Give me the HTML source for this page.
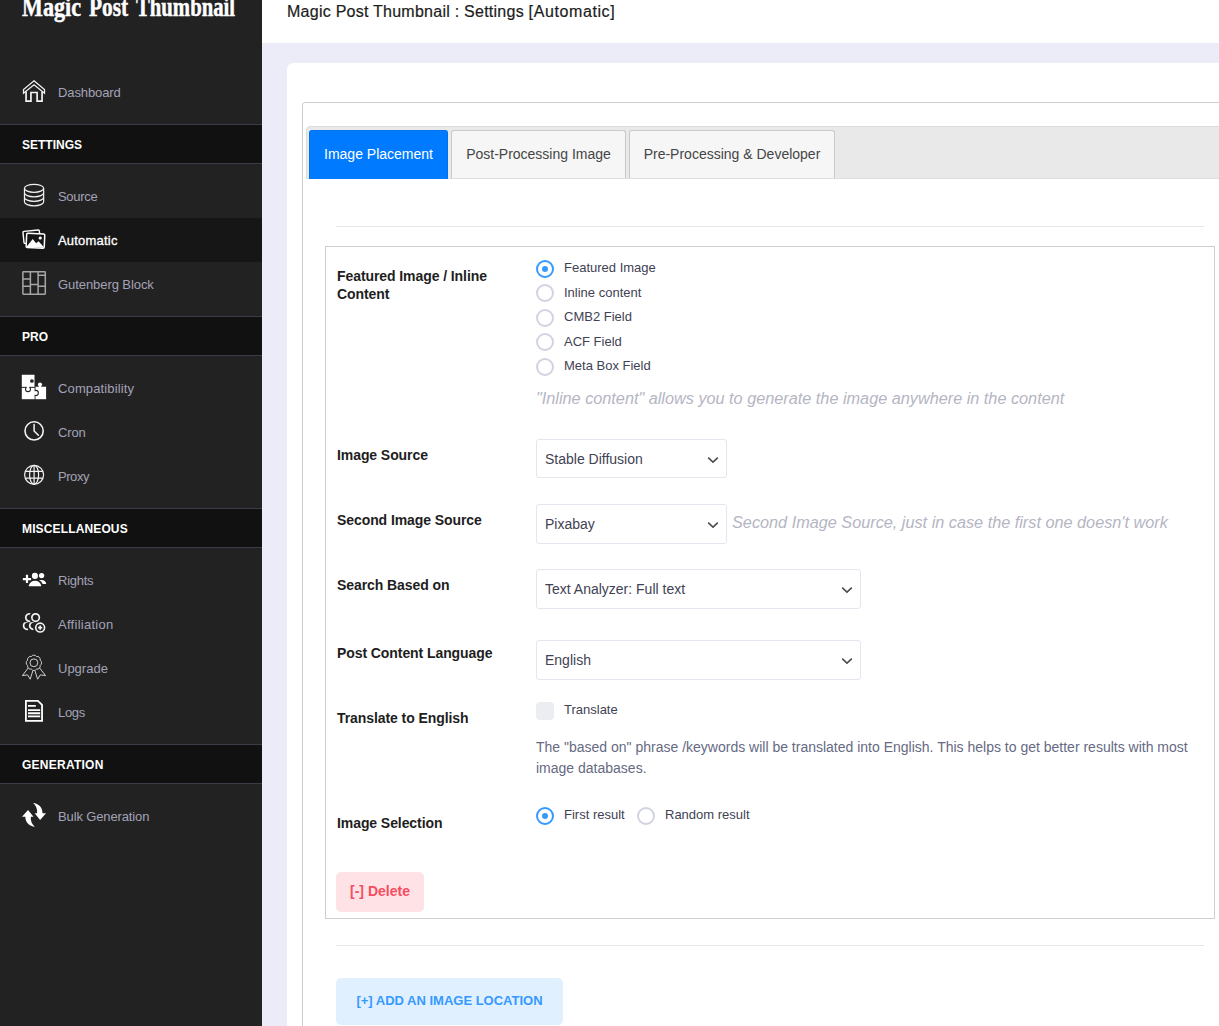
<!DOCTYPE html>
<html lang="en">
<head>
<meta charset="utf-8">
<title>Magic Post Thumbnail : Settings [Automatic]</title>
<style>
*{box-sizing:border-box;margin:0;padding:0}
html,body{width:1219px;height:1026px;overflow:hidden;background:#ebecf7;font-family:"Liberation Sans",sans-serif;}
body{position:relative}
.abs{position:absolute}
/* ---------- sidebar ---------- */
#side{position:absolute;left:0;top:0;width:262px;height:1026px;background:#222222;overflow:hidden}
#logo span{position:absolute;top:-9px;white-space:nowrap;color:#fff;font-family:"Liberation Serif",serif;font-weight:bold;font-size:28px;line-height:32px;transform-origin:0 0;-webkit-text-stroke:.5px #fff}
.sec{position:absolute;left:0;width:262px;height:40px;background:#111111;border-top:1px solid #3b3b4a;border-bottom:1px solid #3b3b4a;color:#fff;font-weight:bold;font-size:12px;line-height:40px;padding-left:22px;letter-spacing:0}
.mi{position:absolute;left:0;width:262px;height:44px;color:#a2a3b7;font-size:13px;line-height:45px;padding-left:58px;white-space:nowrap}
.mi.t10 svg{top:10px}
.mi.act{background:#161616;color:#fff;letter-spacing:.2px;-webkit-text-stroke:.3px #fff}
.mi svg{position:absolute;left:22px;top:8px;width:24px;height:24px;overflow:visible}
/* ---------- main ---------- */
#hdr{position:absolute;left:262px;top:0;width:957px;height:43px;background:#fff}
#hdr span{position:absolute;left:25px;top:0;line-height:23px;font-size:16px;letter-spacing:.33px;color:#1c1c1c;white-space:nowrap;-webkit-text-stroke:.2px #1c1c1c}
#card{position:absolute;left:287px;top:63px;width:940px;height:970px;background:#fff;border-radius:6px 0 0 0}
#inner{position:absolute;left:302px;top:102px;width:930px;height:930px;border:1px solid #ccc;border-radius:3px 0 0 0}
#tabbar{position:absolute;left:306px;top:126px;width:920px;height:53px;background:#e9e9e9;border:1px solid #dddddd;border-radius:4px 0 0 0}
.tab{position:absolute;top:130px;height:48px;border:1px solid #c9c9c9;border-bottom:none;border-radius:3px 3px 0 0;background:#f6f6f6;color:#454545;font-size:14px;line-height:47px;text-align:center;white-space:nowrap}
.tab.on{background:#007bff;border-color:#0072ec;color:#fff;height:49px}
.hr{position:absolute;left:336px;width:868px;height:1px;background:#e6e6e6}
#box{position:absolute;left:325px;top:246px;width:890px;height:673px;border:1px solid #cfcfcf}
.lbl{position:absolute;left:337px;font-weight:bold;font-size:14px;line-height:18px;color:#1e1e1e;letter-spacing:-.08px}
.rad{position:absolute;width:18px;height:18px;border-radius:50%;border:2px solid #d1d3e0;background:#fff}
.rad.on{border:2px solid #3699ff}
.rad.on:after{content:"";position:absolute;left:4px;top:4px;width:6px;height:6px;border-radius:50%;background:#3699ff}
.rl{position:absolute;font-size:13px;line-height:16px;color:#3f4254;white-space:nowrap}
.hint{position:absolute;font-style:italic;font-size:16.25px;line-height:20px;color:#b5b5c3;white-space:nowrap}
.sel{position:absolute;left:536px;height:39px;border:1px solid #e4e6ef;border-radius:3px;background:#fff;font-size:14px;line-height:38px;padding-left:8px;color:#3f4254;white-space:nowrap}
.sel svg{position:absolute;right:7px;top:17px;width:12px;height:8px;overflow:visible}
.chk{position:absolute;left:536px;top:702px;width:18px;height:18px;border-radius:4px;background:#ebedf3}
.desc{position:absolute;left:536px;top:737px;width:670px;font-size:14px;line-height:21px;color:#666a82}
.btn{position:absolute;border-radius:5px;font-weight:bold;font-size:14px;text-align:center;white-space:nowrap}
</style>
</head>
<body>
<!-- SIDEBAR -->
<div id="side">
  <div id="logo"><span style="left:22.4px;transform:scaleX(.79)">Magic</span><span style="left:89.3px;transform:scaleX(.763)">Post</span><span style="left:135.6px;transform:scaleX(.74)">Thumbnail</span></div>
  <div class="mi t10" style="top:70px;letter-spacing:-0.1px"><svg viewBox="0 0 24 24"><path d="M12 0.8 L22.5 9.6 V13.2 L12 4.7 L1.5 13.2 V9.6 Z" fill="none" stroke="#f2f2f2" stroke-width="1.25" stroke-linejoin="miter"/><path d="M4.05 11.6 V21.05 H8.95 V12.5 H15.1 V21.05 H20.05 V11.6" fill="none" stroke="#f2f2f2" stroke-width="1.7"/></svg>Dashboard</div>
  <div class="sec" style="top:124px">SETTINGS</div>
  <div class="mi t10" style="top:174px;letter-spacing:-0.3px"><svg viewBox="0 0 24 24"><g fill="none" stroke="#f2f2f2" stroke-width="1.2"><ellipse cx="12.05" cy="4.3" rx="9.6" ry="4"/><path d="M2.45 4.3 V17.8 A9.6 4 0 0 0 21.65 17.8 V4.3"/><path d="M2.45 8.8 A9.6 4 0 0 0 21.65 8.8"/><path d="M2.45 13.3 A9.6 4 0 0 0 21.65 13.3"/></g></svg>Source</div>
  <div class="mi act t10" style="top:218px"><svg viewBox="0 0 24 24"><g transform="rotate(-5.7 0.9 3.5)"><rect x="0.9" y="3.5" width="16.4" height="12" rx="1" fill="none" stroke="#fff" stroke-width="1.4"/></g><g transform="rotate(2.5 13.5 12.7)"><rect x="4.4" y="5.6" width="18.1" height="14.2" rx="1.2" fill="#161616" stroke="#fff" stroke-width="1.5"/><path d="M5 19 L10.7 11 L14.2 15.3 L16.6 13.2 L22 18.6 V19.4 H5Z" fill="#fff"/><circle cx="18.1" cy="9.8" r="1.6" fill="#fff"/></g></svg>Automatic</div>
  <div class="mi" style="top:262px;letter-spacing:-0.07px"><svg viewBox="0 0 24 24"><g fill="none" stroke="#a6a6a6" stroke-width="1.5"><rect x="0.9" y="1.7" width="22.4" height="22.5" rx="0.6"/><path d="M8.4 1.6 V24.3 M16.1 1.6 V24.3 M0.8 8.9 H8.4 M0.8 16.3 H8.4 M8.4 14.6 H16.1 M16.1 5.2 H23.4 M16.1 16.3 H23.4"/></g></svg>Gutenberg Block</div>
  <div class="sec" style="top:316px">PRO</div>
  <div class="mi" style="top:366px;letter-spacing:0.13px"><svg viewBox="0 0 24 24"><rect x="13.3" y="12.7" width="10.8" height="12.5" fill="#fff"/><circle cx="18" cy="10.6" r="2.1" fill="#fff"/><rect x="16.9" y="10.6" width="2.2" height="3" fill="#fff"/><circle cx="13.8" cy="18.9" r="3.1" fill="#222222"/><rect x="12.5" y="12.5" width="0.8" height="12.8" fill="#222222"/><rect x="-0.2" y="13.6" width="12.8" height="11.6" fill="#fff"/><circle cx="13.8" cy="18.9" r="2" fill="#fff"/><rect x="11.5" y="17.8" width="2" height="2.2" fill="#fff"/><circle cx="6" cy="15.2" r="3" fill="#222222"/><rect x="-0.2" y="12.8" width="12.9" height="0.8" fill="#222222"/><rect x="-0.2" y="0.75" width="12.7" height="12.1" fill="#fff"/><circle cx="6" cy="15.2" r="1.9" fill="#fff"/><rect x="4.9" y="12" width="2.2" height="2.5" fill="#fff"/><circle cx="9.9" cy="7" r="1.85" fill="#222222"/></svg>Compatibility</div>
  <div class="mi" style="top:410px;letter-spacing:-0.15px"><svg viewBox="0 0 24 24"><circle cx="12.1" cy="12.9" r="9.1" fill="none" stroke="#f2f2f2" stroke-width="1.6"/><path d="M12.1 6.6 V12.9 L16.4 17.3" fill="none" stroke="#f2f2f2" stroke-width="1.5" stroke-linecap="round" stroke-linejoin="round"/></svg>Cron</div>
  <div class="mi" style="top:454px;letter-spacing:-0.45px"><svg viewBox="0 0 24 24"><g fill="none" stroke="#f2f2f2" stroke-width="1.2"><circle cx="12.1" cy="12.8" r="9.5"/><ellipse cx="12.1" cy="12.8" rx="4.5" ry="9.5"/><path d="M12.1 3.3 V22.3 M3.3 9.4 H20.9 M3.3 16.2 H20.9"/></g></svg>Proxy</div>
  <div class="sec" style="top:508px;letter-spacing:.14px">MISCELLANEOUS</div>
  <div class="mi" style="top:558px;letter-spacing:-0.25px"><svg viewBox="0 0 24 24"><path d="M4.97 8.85 V17.1 M0.83 13.1 H9.1" stroke="#fff" stroke-width="2.2" fill="none"/><circle cx="12.92" cy="9.9" r="3.05" fill="#fff"/><path d="M6.8 20.2 V19.4 C7.6 16.4 10 14.7 13 14.7 C16 14.7 18.4 16.4 19.2 19.4 V20.2 Z" fill="#fff"/><circle cx="19.6" cy="9.55" r="2.65" fill="#fff"/><path d="M17 13.9 H19.6 C22.4 13.9 24.2 15.9 24.2 18.1 H20.6 C20 16.1 18.8 14.8 17 13.9 Z" fill="#fff"/></svg>Rights</div>
  <div class="mi" style="top:602px;letter-spacing:0.27px"><svg viewBox="0 0 24 24"><defs><clipPath id="cpa"><rect x="-1" y="12.35" width="26" height="13"/></clipPath></defs><g fill="none" stroke="#f2f2f2" stroke-width="1.7"><circle cx="13.6" cy="7.6" r="3.75"/><path d="M8.23 3.83 A3.8 3.8 0 1 0 8.23 11.31"/><g clip-path="url(#cpa)"><path d="M5.63 11.86 A3.75 3.75 0 1 0 6.08 19.27"/><path d="M11.69 11.86 A3.75 3.75 0 1 0 11.36 19.35"/></g><circle cx="18.15" cy="17.6" r="4.45" stroke-width="1.6"/><path d="M18.15 15.5 V19.7 M16.05 17.6 H20.25" stroke-width="1.7"/></g></svg>Affiliation</div>
  <div class="mi" style="top:646px"><svg viewBox="0 0 24 24"><g fill="none" stroke="#d8d8d8" stroke-width="0.95" stroke-linejoin="round"><path d="M9.30 2.52 A3.1 3.1 0 0 1 14.50 2.52 A3.1 3.1 0 0 1 18.18 6.20 A3.1 3.1 0 0 1 18.18 11.40 A3.1 3.1 0 0 1 14.50 15.08 A3.1 3.1 0 0 1 9.30 15.08 A3.1 3.1 0 0 1 5.62 11.40 A3.1 3.1 0 0 1 5.62 6.20 A3.1 3.1 0 0 1 9.30 2.52 Z"/><circle cx="11.9" cy="8.8" r="3.9"/><path d="M6.2 14 L0.4 21.6 L5.6 20.9 L8.2 25.2 L10.9 16.6"/><path d="M17.6 14 L23.6 21.6 L18.3 20.9 L15.6 25.2 L12.9 16.6"/></g></svg>Upgrade</div>
  <div class="mi" style="top:690px;letter-spacing:-0.3px"><svg viewBox="0 0 24 24"><path d="M3.9 2.8 H15.9 L20.05 6.95 V22.9 H3.9 Z" fill="none" stroke="#fff" stroke-width="1.8"/><path d="M6 7.85 H13.8 M6 12.2 H18.15 M6 15.25 H18.15 M6 18.3 H18.15" stroke="#fff" stroke-width="1.8" fill="none"/></svg>Logs</div>
  <div class="sec" style="top:744px;letter-spacing:.25px">GENERATION</div>
  <div class="mi" style="top:794px;letter-spacing:-0.13px"><svg viewBox="0 0 24 24"><path d="M11.1 1 C16.5 1.6 20.6 5.2 20.5 11.2 H24 L18.1 18 L12.7 11.2 H15.1 C15.6 7 14 3.6 11.1 1 Z" fill="#fff"/><path d="M12.9 24.8 C7.5 24.2 3.4 20.7 3.3 14.7 H0 L6 8 L11.5 14.7 H8.8 C8.4 19 10 22.3 12.9 24.8 Z" fill="#fff"/></svg>Bulk Generation</div>
</div>

<!-- MAIN -->
<div id="hdr"><span><i style="font-style:normal;letter-spacing:.25px">Magic Post Thumbnail : Settings </i><i style="font-style:normal;letter-spacing:.6px">[Automatic]</i></span></div>
<div id="card"></div>
<div id="inner"></div>
<div id="tabbar"></div>
<div class="tab on" style="left:309px;width:139px">Image Placement</div>
<div class="tab" style="left:451px;width:175px">Post-Processing Image</div>
<div class="tab" style="left:629px;width:206px">Pre-Processing &amp; Developer</div>

<div class="hr" style="top:226px"></div>
<div id="box"></div>

<div class="lbl" style="top:267px">Featured Image / Inline<br>Content</div>
<div class="rad on" style="left:536px;top:260px"></div><div class="rl" style="left:564px;top:260px">Featured Image</div>
<div class="rad" style="left:536px;top:284px"></div><div class="rl" style="left:564px;top:285px">Inline content</div>
<div class="rad" style="left:536px;top:309px"></div><div class="rl" style="left:564px;top:309px">CMB2 Field</div>
<div class="rad" style="left:536px;top:333px"></div><div class="rl" style="left:564px;top:334px">ACF Field</div>
<div class="rad" style="left:536px;top:358px"></div><div class="rl" style="left:564px;top:358px">Meta Box Field</div>
<div class="hint" style="left:536px;top:388px">"Inline content" allows you to generate the image anywhere in the content</div>

<div class="lbl" style="top:446px">Image Source</div>
<div class="sel" style="top:439px;width:191px">Stable Diffusion<svg viewBox="0 0 12 8"><path d="M1.2 0.6 L6 5.1 L10.8 0.6" fill="none" stroke="#4a4a4a" stroke-width="1.5"/></svg></div>

<div class="lbl" style="top:511px">Second Image Source</div>
<div class="sel" style="top:504px;width:191px;height:40px">Pixabay<svg viewBox="0 0 12 8"><path d="M1.2 0.6 L6 5.1 L10.8 0.6" fill="none" stroke="#4a4a4a" stroke-width="1.5"/></svg></div>
<div class="hint" style="left:732px;top:512px">Second Image Source, just in case the first one doesn't work</div>

<div class="lbl" style="top:576px">Search Based on</div>
<div class="sel" style="top:569px;width:325px;height:40px">Text Analyzer: Full text<svg viewBox="0 0 12 8"><path d="M1.2 0.6 L6 5.1 L10.8 0.6" fill="none" stroke="#4a4a4a" stroke-width="1.5"/></svg></div>

<div class="lbl" style="top:644px">Post Content Language</div>
<div class="sel" style="top:640px;width:325px;height:40px">English<svg viewBox="0 0 12 8"><path d="M1.2 0.6 L6 5.1 L10.8 0.6" fill="none" stroke="#4a4a4a" stroke-width="1.5"/></svg></div>

<div class="lbl" style="top:709px">Translate to English</div>
<div class="chk"></div><div class="rl" style="left:564px;top:702px">Translate</div>
<div class="desc">The "based on" phrase /keywords will be translated into English. This helps to get better results with most image databases.</div>

<div class="lbl" style="top:814px">Image Selection</div>
<div class="rad on" style="left:536px;top:807px"></div><div class="rl" style="left:564px;top:807px">First result</div>
<div class="rad" style="left:637px;top:807px"></div><div class="rl" style="left:665px;top:807px">Random result</div>

<div class="btn" style="left:336px;top:872px;width:88px;height:40px;line-height:39px;background:#ffe2e5;color:#f64e60">[-] Delete</div>
<div class="hr" style="top:945px"></div>
<div class="btn" style="left:336px;top:978px;width:227px;height:47px;line-height:46px;font-size:13px;background:#e1f0ff;color:#3699ff">[+] ADD AN IMAGE LOCATION</div>
</body>
</html>
